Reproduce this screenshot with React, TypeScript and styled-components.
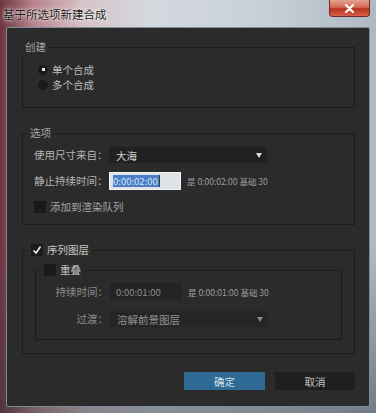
import styled, { createGlobalStyle } from "styled-components";

const GlobalStyle = createGlobalStyle`
  html, body {
    margin: 0;
    padding: 0;
    background: #2b2b2b;
  }
  body {
    font-family: "Noto Sans CJK SC", "Noto Sans", sans-serif;
  }
`;

const Window = styled.div`
  width: 376px;
  height: 413px;
  box-sizing: border-box;
  display: flex;
  flex-direction: column;
  padding: 0 6px 6px;
  background:
    linear-gradient(180deg, rgba(0, 0, 0, 0) 0%, rgba(0, 0, 0, 0) 60%, rgba(40, 50, 60, 0.45) 100%),
    linear-gradient(90deg, #6e3540 0%, #b8848d 9%, #d6c3c8 22%, #d3d9de 40%, #c8d0d7 70%, #aeb9c4 100%);
`;

const TitleBar = styled.div`
  height: 27px;
  display: flex;
  align-items: flex-start;
  justify-content: space-between;
  margin-left: -3px;
`;

const Title = styled.div`
  padding-top: 6px;
  font-size: 11.5px;
  line-height: 16px;
  color: #1c1c1c;
  text-shadow: 0 0 5px rgba(255, 255, 255, 0.9), 0 0 2px rgba(255, 255, 255, 0.8);
`;

const CloseButton = styled.div`
  width: 41px;
  height: 17px;
  box-sizing: border-box;
  display: flex;
  align-items: center;
  justify-content: center;
  border: 1px solid #6e2a22;
  border-top: none;
  border-radius: 0 0 4px 4px;
  background: linear-gradient(180deg, #e7a08f 0%, #d46a55 45%, #b8311f 55%, #d8604a 100%);
`;

const Body = styled.div`
  flex: 1;
  display: flex;
  flex-direction: column;
  gap: 18px;
  padding: 12px 14px 0 15px;
  background: #2b2b2b;
  border: 1px solid #7f8b97;
  border-radius: 2px;
`;

const Group = styled.fieldset<{ $pad: string }>`
  margin: 0;
  min-width: 0;
  padding: ${(p) => p.$pad};
  border: 1px solid #1c1c1c;
  display: flex;
  flex-direction: column;
`;

const Legend = styled.legend<{ $shift: number; $bright?: boolean }>`
  margin-left: ${(p) => p.$shift}px;
  padding: 0 3px;
  display: flex;
  align-items: center;
  gap: 4px;
  font-size: 10.5px;
  line-height: 14px;
  color: ${(p) => (p.$bright ? "#c6c6c6" : "#a6a6a6")};
`;

const RadioRow = styled.div`
  height: 15px;
  display: flex;
  align-items: center;
  gap: 4px;
  font-size: 10.5px;
  color: #bdbdbd;
`;

const Radio = styled.span<{ $on?: boolean }>`
  width: 10px;
  height: 10px;
  border-radius: 50%;
  background: #191919;
  display: flex;
  align-items: center;
  justify-content: center;
  &::after {
    content: "";
    width: 3px;
    height: 3px;
    background: ${(p) => (p.$on ? "#e6e6e6" : "transparent")};
  }
`;

const Rows = styled.div<{ $gap: number }>`
  display: flex;
  flex-direction: column;
  gap: ${(p) => p.$gap}px;
`;

const Row = styled.div`
  display: flex;
  align-items: center;
`;

const Label = styled.span<{ $width: number; $dim?: boolean }>`
  width: ${(p) => p.$width}px;
  margin-right: 2px;
  text-align: right;
  white-space: nowrap;
  font-size: 10.5px;
  line-height: 14px;
  color: ${(p) => (p.$dim ? "#8c8c8c" : "#b4b4b4")};
`;

const Select = styled.div<{ $dim?: boolean }>`
  width: 158px;
  height: 16px;
  box-sizing: border-box;
  display: flex;
  align-items: center;
  justify-content: space-between;
  padding: 0 5px 0 7px;
  background: ${(p) => (p.$dim ? "#252525" : "#212121")};
  font-size: 10.5px;
  color: ${(p) => (p.$dim ? "#929292" : "#d4d4d4")};
`;

const Arrow = styled.span<{ $dim?: boolean }>`
  width: 0;
  height: 0;
  border-left: 3.5px solid transparent;
  border-right: 3.5px solid transparent;
  border-top: 5px solid ${(p) => (p.$dim ? "#8a8a8a" : "#dcdcdc")};
`;

const TimeField = styled.div<{ $light?: boolean }>`
  width: 72px;
  height: ${(p) => (p.$light ? 18 : 17)}px;
  box-sizing: border-box;
  display: flex;
  align-items: center;
  padding-left: ${(p) => (p.$light ? 3 : 5)}px;
  background: ${(p) => (p.$light ? "#dfe3e7" : "#242424")};
  border: 1px solid ${(p) => (p.$light ? "#f0f2f4" : "#242424")};
  font-size: 9.5px;
  color: #8e8e8e;
`;

const Selected = styled.span`
  background: #4a7fc6;
  color: #d8e6f6;
  line-height: 12px;
  padding-right: 1px;
  border-right: 1px solid #3c3c3c;
`;

const Info = styled.span`
  margin-left: 6px;
  font-size: 8.5px;
  color: #9c9c9c;
  white-space: nowrap;
`;

const CheckRow = styled.div`
  display: flex;
  align-items: center;
  gap: 4px;
  font-size: 10.5px;
  color: #a6a6a6;
`;

const Box = styled.span`
  width: 12px;
  height: 12px;
  background: #1a1a1a;
  display: flex;
  align-items: center;
  justify-content: center;
`;

const Footer = styled.div`
  display: flex;
  justify-content: flex-end;
  gap: 10px;
`;

const Button = styled.div<{ $primary?: boolean; $width: number }>`
  width: ${(p) => p.$width}px;
  height: 18px;
  display: flex;
  align-items: center;
  justify-content: center;
  background: ${(p) => (p.$primary ? "#2e6a93" : "#1f1f1f")};
  font-size: 10.5px;
  color: ${(p) => (p.$primary ? "#d6e2ec" : "#c4c4c4")};
`;

function Check() {
  return (
    <svg width="10" height="10" viewBox="0 0 10 10">
      <path d="M1.5 5.5 L4 8 L8.5 1.5" fill="none" stroke="#f0f0f0" strokeWidth="1.6" />
    </svg>
  );
}

export default function App() {
  return (
    <>
      <GlobalStyle />
      <Window>
        <TitleBar>
          <Title>基于所选项新建合成</Title>
          <CloseButton>
            <svg width="11" height="9" viewBox="0 0 11 9">
              <path d="M2 1 L9 8 M9 1 L2 8" stroke="#ffffff" strokeWidth="2.2" strokeLinecap="round" />
            </svg>
          </CloseButton>
        </TitleBar>
        <Body>
          <Group $pad="8px 15px 15px">
            <Legend $shift={-16}>创建</Legend>
            <RadioRow>
              <Radio $on />
              单个合成
            </RadioRow>
            <RadioRow>
              <Radio />
              多个合成
            </RadioRow>
          </Group>

          <Group $pad="7px 12px 10px 11px">
            <Legend $shift={-7}>选项</Legend>
            <Rows $gap={9}>
              <Row>
                <Label $width={73}>使用尺寸来自：</Label>
                <Select>
                  大海
                  <Arrow />
                </Select>
              </Row>
              <Row>
                <Label $width={73}>静止持续时间：</Label>
                <TimeField $light>
                  <Selected>0:00:02:00</Selected>
                </TimeField>
                <Info>是 0:00:02:00 基础 30</Info>
              </Row>
              <CheckRow>
                <Box />
                添加到渲染队列
              </CheckRow>
            </Rows>
          </Group>

          <Group $pad="6px 12px 13px">
            <Legend $shift={-7} $bright>
              <Box>
                <Check />
              </Box>
              序列图层
            </Legend>
            <Group $pad="6px 0 12px">
              <Legend $shift={5} $bright>
                <Box />
                重叠
              </Legend>
              <Rows $gap={11}>
                <Row>
                  <Label $width={72} $dim>
                    持续时间：
                  </Label>
                  <TimeField>0:00:01:00</TimeField>
                  <Info>是 0:00:01:00 基础 30</Info>
                </Row>
                <Row>
                  <Label $width={72} $dim>
                    过渡：
                  </Label>
                  <Select $dim>
                    溶解前景图层
                    <Arrow $dim />
                  </Select>
                </Row>
              </Rows>
            </Group>
          </Group>

          <Footer>
            <Button $primary $width={81}>
              确定
            </Button>
            <Button $width={80}>取消</Button>
          </Footer>
        </Body>
      </Window>
    </>
  );
}
